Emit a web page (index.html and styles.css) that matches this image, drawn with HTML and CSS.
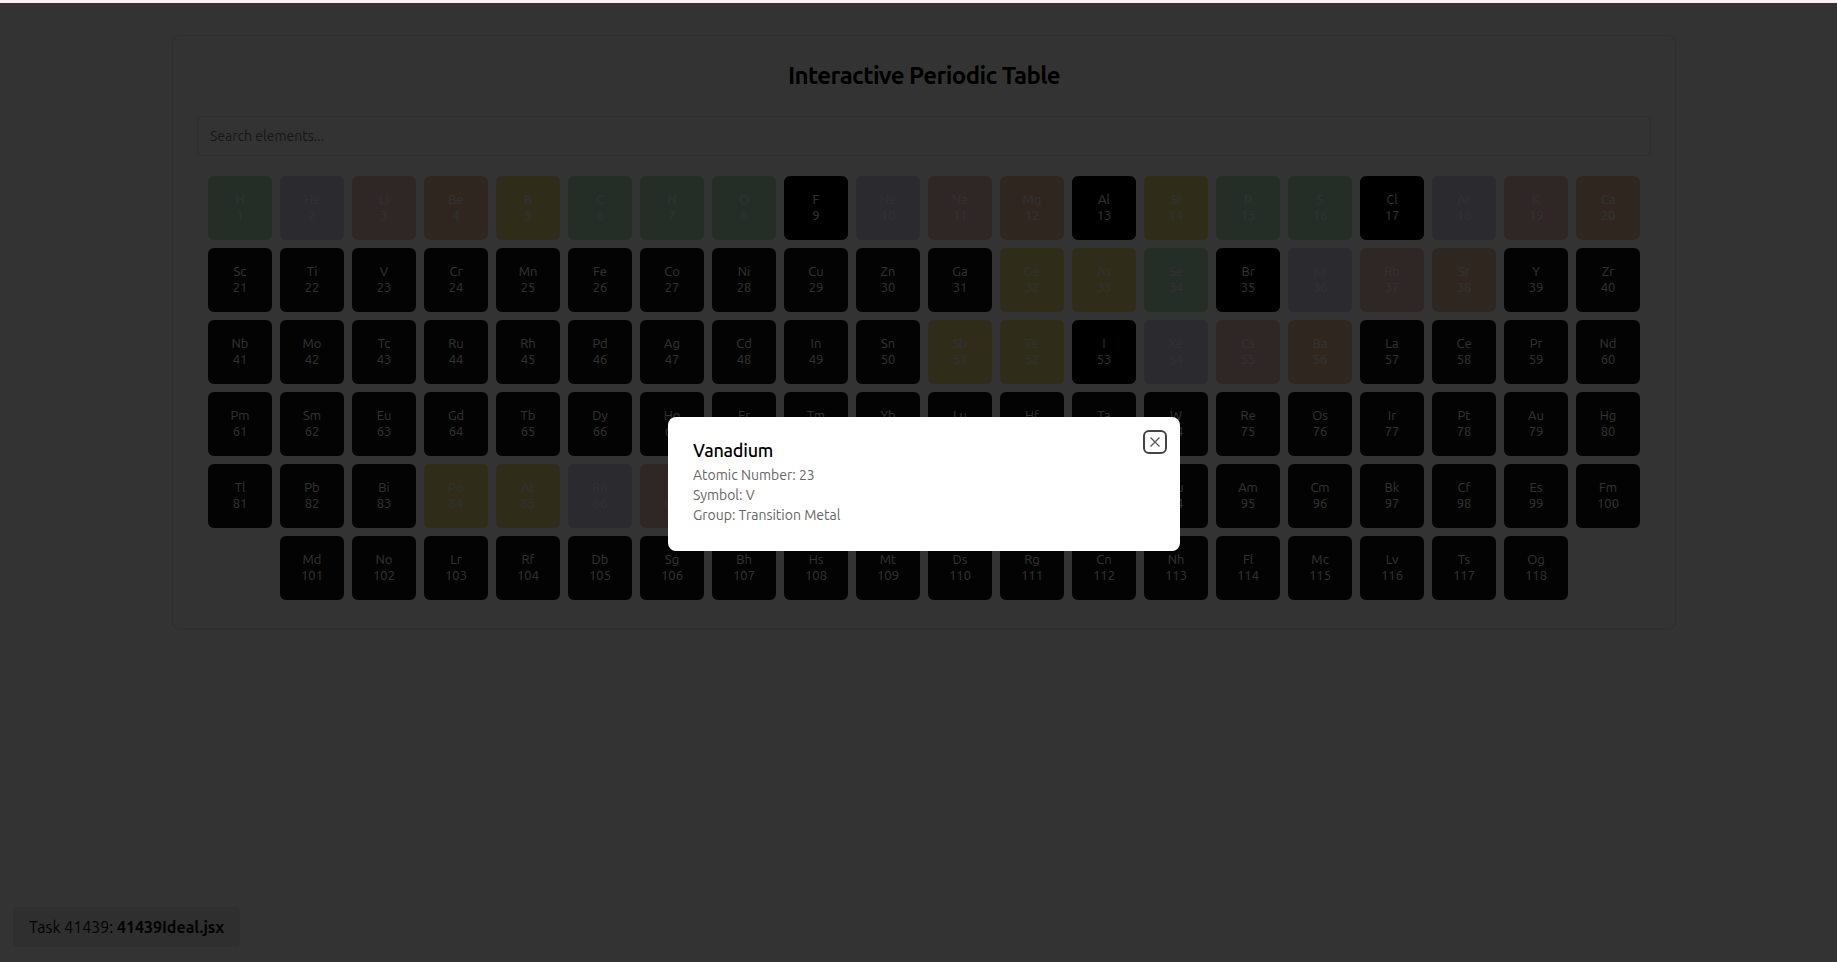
FILE: index.html
```html
<!DOCTYPE html>
<html lang="en">
<head>
<meta charset="utf-8">
<title>Interactive Periodic Table</title>
<link rel="stylesheet" href="styles.css">
</head>
<body>
<div class="page">
  <div class="strip"></div>
  <main class="card">
    <h1 class="title">Interactive Periodic Table</h1>
    <input class="search" type="text" placeholder="Search elements...">
    <div class="grid">
      <div class="tile nonmetal"><span>H</span><span>1</span></div>
      <div class="tile noble"><span>He</span><span>2</span></div>
      <div class="tile alkali"><span>Li</span><span>3</span></div>
      <div class="tile earth"><span>Be</span><span>4</span></div>
      <div class="tile metalloid"><span>B</span><span>5</span></div>
      <div class="tile nonmetal"><span>C</span><span>6</span></div>
      <div class="tile nonmetal"><span>N</span><span>7</span></div>
      <div class="tile nonmetal"><span>O</span><span>8</span></div>
      <div class="tile other"><span>F</span><span>9</span></div>
      <div class="tile noble"><span>Ne</span><span>10</span></div>
      <div class="tile alkali"><span>Na</span><span>11</span></div>
      <div class="tile earth"><span>Mg</span><span>12</span></div>
      <div class="tile other"><span>Al</span><span>13</span></div>
      <div class="tile metalloid"><span>Si</span><span>14</span></div>
      <div class="tile nonmetal"><span>P</span><span>15</span></div>
      <div class="tile nonmetal"><span>S</span><span>16</span></div>
      <div class="tile other"><span>Cl</span><span>17</span></div>
      <div class="tile noble"><span>Ar</span><span>18</span></div>
      <div class="tile alkali"><span>K</span><span>19</span></div>
      <div class="tile earth"><span>Ca</span><span>20</span></div>
      <div class="tile"><span>Sc</span><span>21</span></div>
      <div class="tile"><span>Ti</span><span>22</span></div>
      <div class="tile"><span>V</span><span>23</span></div>
      <div class="tile"><span>Cr</span><span>24</span></div>
      <div class="tile"><span>Mn</span><span>25</span></div>
      <div class="tile"><span>Fe</span><span>26</span></div>
      <div class="tile"><span>Co</span><span>27</span></div>
      <div class="tile"><span>Ni</span><span>28</span></div>
      <div class="tile"><span>Cu</span><span>29</span></div>
      <div class="tile"><span>Zn</span><span>30</span></div>
      <div class="tile"><span>Ga</span><span>31</span></div>
      <div class="tile metalloid"><span>Ge</span><span>32</span></div>
      <div class="tile metalloid"><span>As</span><span>33</span></div>
      <div class="tile nonmetal"><span>Se</span><span>34</span></div>
      <div class="tile other"><span>Br</span><span>35</span></div>
      <div class="tile noble"><span>Kr</span><span>36</span></div>
      <div class="tile alkali"><span>Rb</span><span>37</span></div>
      <div class="tile earth"><span>Sr</span><span>38</span></div>
      <div class="tile"><span>Y</span><span>39</span></div>
      <div class="tile"><span>Zr</span><span>40</span></div>
      <div class="tile"><span>Nb</span><span>41</span></div>
      <div class="tile"><span>Mo</span><span>42</span></div>
      <div class="tile"><span>Tc</span><span>43</span></div>
      <div class="tile"><span>Ru</span><span>44</span></div>
      <div class="tile"><span>Rh</span><span>45</span></div>
      <div class="tile"><span>Pd</span><span>46</span></div>
      <div class="tile"><span>Ag</span><span>47</span></div>
      <div class="tile"><span>Cd</span><span>48</span></div>
      <div class="tile"><span>In</span><span>49</span></div>
      <div class="tile"><span>Sn</span><span>50</span></div>
      <div class="tile metalloid"><span>Sb</span><span>51</span></div>
      <div class="tile metalloid"><span>Te</span><span>52</span></div>
      <div class="tile other"><span>I</span><span>53</span></div>
      <div class="tile noble"><span>Xe</span><span>54</span></div>
      <div class="tile alkali"><span>Cs</span><span>55</span></div>
      <div class="tile earth"><span>Ba</span><span>56</span></div>
      <div class="tile"><span>La</span><span>57</span></div>
      <div class="tile"><span>Ce</span><span>58</span></div>
      <div class="tile"><span>Pr</span><span>59</span></div>
      <div class="tile"><span>Nd</span><span>60</span></div>
      <div class="tile"><span>Pm</span><span>61</span></div>
      <div class="tile"><span>Sm</span><span>62</span></div>
      <div class="tile"><span>Eu</span><span>63</span></div>
      <div class="tile"><span>Gd</span><span>64</span></div>
      <div class="tile"><span>Tb</span><span>65</span></div>
      <div class="tile"><span>Dy</span><span>66</span></div>
      <div class="tile"><span>Ho</span><span>67</span></div>
      <div class="tile"><span>Er</span><span>68</span></div>
      <div class="tile"><span>Tm</span><span>69</span></div>
      <div class="tile"><span>Yb</span><span>70</span></div>
      <div class="tile"><span>Lu</span><span>71</span></div>
      <div class="tile"><span>Hf</span><span>72</span></div>
      <div class="tile"><span>Ta</span><span>73</span></div>
      <div class="tile"><span>W</span><span>74</span></div>
      <div class="tile"><span>Re</span><span>75</span></div>
      <div class="tile"><span>Os</span><span>76</span></div>
      <div class="tile"><span>Ir</span><span>77</span></div>
      <div class="tile"><span>Pt</span><span>78</span></div>
      <div class="tile"><span>Au</span><span>79</span></div>
      <div class="tile"><span>Hg</span><span>80</span></div>
      <div class="tile"><span>Tl</span><span>81</span></div>
      <div class="tile"><span>Pb</span><span>82</span></div>
      <div class="tile"><span>Bi</span><span>83</span></div>
      <div class="tile metalloid"><span>Po</span><span>84</span></div>
      <div class="tile metalloid"><span>At</span><span>85</span></div>
      <div class="tile noble"><span>Rn</span><span>86</span></div>
      <div class="tile alkali"><span>Fr</span><span>87</span></div>
      <div class="tile earth"><span>Ra</span><span>88</span></div>
      <div class="tile"><span>Ac</span><span>89</span></div>
      <div class="tile"><span>Th</span><span>90</span></div>
      <div class="tile"><span>Pa</span><span>91</span></div>
      <div class="tile"><span>U</span><span>92</span></div>
      <div class="tile"><span>Np</span><span>93</span></div>
      <div class="tile"><span>Pu</span><span>94</span></div>
      <div class="tile"><span>Am</span><span>95</span></div>
      <div class="tile"><span>Cm</span><span>96</span></div>
      <div class="tile"><span>Bk</span><span>97</span></div>
      <div class="tile"><span>Cf</span><span>98</span></div>
      <div class="tile"><span>Es</span><span>99</span></div>
      <div class="tile"><span>Fm</span><span>100</span></div>
      <div class="tile"><span>Md</span><span>101</span></div>
      <div class="tile"><span>No</span><span>102</span></div>
      <div class="tile"><span>Lr</span><span>103</span></div>
      <div class="tile"><span>Rf</span><span>104</span></div>
      <div class="tile"><span>Db</span><span>105</span></div>
      <div class="tile"><span>Sg</span><span>106</span></div>
      <div class="tile"><span>Bh</span><span>107</span></div>
      <div class="tile"><span>Hs</span><span>108</span></div>
      <div class="tile"><span>Mt</span><span>109</span></div>
      <div class="tile"><span>Ds</span><span>110</span></div>
      <div class="tile"><span>Rg</span><span>111</span></div>
      <div class="tile"><span>Cn</span><span>112</span></div>
      <div class="tile"><span>Nh</span><span>113</span></div>
      <div class="tile"><span>Fl</span><span>114</span></div>
      <div class="tile"><span>Mc</span><span>115</span></div>
      <div class="tile"><span>Lv</span><span>116</span></div>
      <div class="tile"><span>Ts</span><span>117</span></div>
      <div class="tile"><span>Og</span><span>118</span></div>
    </div>
  </main>
  <div class="task">Task 41439: <strong>41439Ideal.jsx</strong></div>
  <div class="overlay">
    <section class="modal">
      <button class="close" type="button" aria-label="Close">
        <svg class="close-icon" viewBox="0 0 14 14" aria-hidden="true"><path d="M2.5 2.5l9 9M11.5 2.5l-9 9"/></svg>
      </button>
      <h2 class="modal-title">Vanadium</h2>
      <p class="modal-line">Atomic Number: 23</p>
      <p class="modal-line">Symbol: V</p>
      <p class="modal-line">Group: Transition Metal</p>
    </section>
  </div>
</div>
</body>
</html>
```
FILE: styles.css
```css
* { box-sizing: border-box; }
html, body { margin: 0; height: 100%; overflow: hidden; }
body {
  font-family: "Ubuntu", "Noto Sans", "Open Sans", sans-serif;
  background: #fff;
  color: #000;
}
.page {
  position: relative;
  width: 1848px;
  height: 962px;
  background: #fff;
  overflow: hidden;
}
.strip { height: 3px; background: #fdf0f4; }
.card {
  width: 1504px;
  margin: 32px auto 0;
  padding: 24px;
  background: #ffffff;
  border: 1px solid #e5e5e5;
  border-radius: 8px;
  box-shadow: 0 1px 3px rgba(0, 0, 0, .08);
}
.title {
  margin: 0 0 25px;
  font-size: 24px;
  line-height: 31px;
  font-weight: 700;
  letter-spacing: -0.025em;
  text-align: center;
  color: #000;
}
.search {
  display: block;
  width: 100%;
  height: 40px;
  padding: 0 12px;
  margin-bottom: 16px;
  border: 1px solid #e5e5e5;
  border-radius: 4px;
  font: inherit;
  font-size: 14px;
  background: #fff;
}
.search::placeholder { color: #757575; }
.grid {
  display: flex;
  flex-wrap: wrap;
  justify-content: center;
  gap: 8px;
  padding: 4px;
}
.tile {
  width: 64px;
  height: 64px;
  padding-bottom: 2px;
  display: flex;
  flex-direction: column;
  align-items: center;
  justify-content: center;
  border-radius: 6px;
  background: #111;
  color: #f2f2f2;
  font-size: 13px;
  line-height: 16px;
}
.other { background: #000; }
.nonmetal { background: #b8e2c4; color: #f0f0f0; }
.noble { background: #d8d0ec; color: #f0f0f0; }
.alkali { background: #e8c0bc; color: #f0f0f0; }
.earth { background: #e8c49a; color: #f0f0f0; }
.metalloid { background: #ece084; color: #f0f0f0; }
.task {
  position: absolute;
  left: 13px;
  bottom: 15px;
  height: 40px;
  padding: 0 16px;
  display: flex;
  align-items: center;
  white-space: pre;
  font-size: 16px;
  color: #111;
  background: #e8e8e8;
  border-radius: 4px;
}
.overlay {
  position: absolute;
  inset: 3px 0 0 0;
  padding-top: 3px;
  display: flex;
  align-items: center;
  justify-content: center;
  background: rgba(0, 0, 0, .8);
}
.modal {
  position: relative;
  width: 512px;
  padding: 20px 25px 26px;
  background: #fff;
  border-radius: 8px;
}
.modal-title {
  margin: 0 0 1px;
  font-size: 18px;
  line-height: 27px;
  font-weight: 500;
  letter-spacing: -0.25px;
  color: #000;
}
.modal-line {
  margin: 0;
  font-size: 14px;
  line-height: 20px;
  color: #666;
}
.close {
  position: absolute;
  top: 13px;
  right: 13px;
  width: 24px;
  height: 24px;
  padding: 0;
  display: flex;
  align-items: center;
  justify-content: center;
  background: transparent;
  border: 2px solid #444;
  border-radius: 6px;
}
.close-icon {
  width: 14px;
  height: 14px;
  fill: none;
  stroke: #555;
  stroke-width: 1.2;
}
```
